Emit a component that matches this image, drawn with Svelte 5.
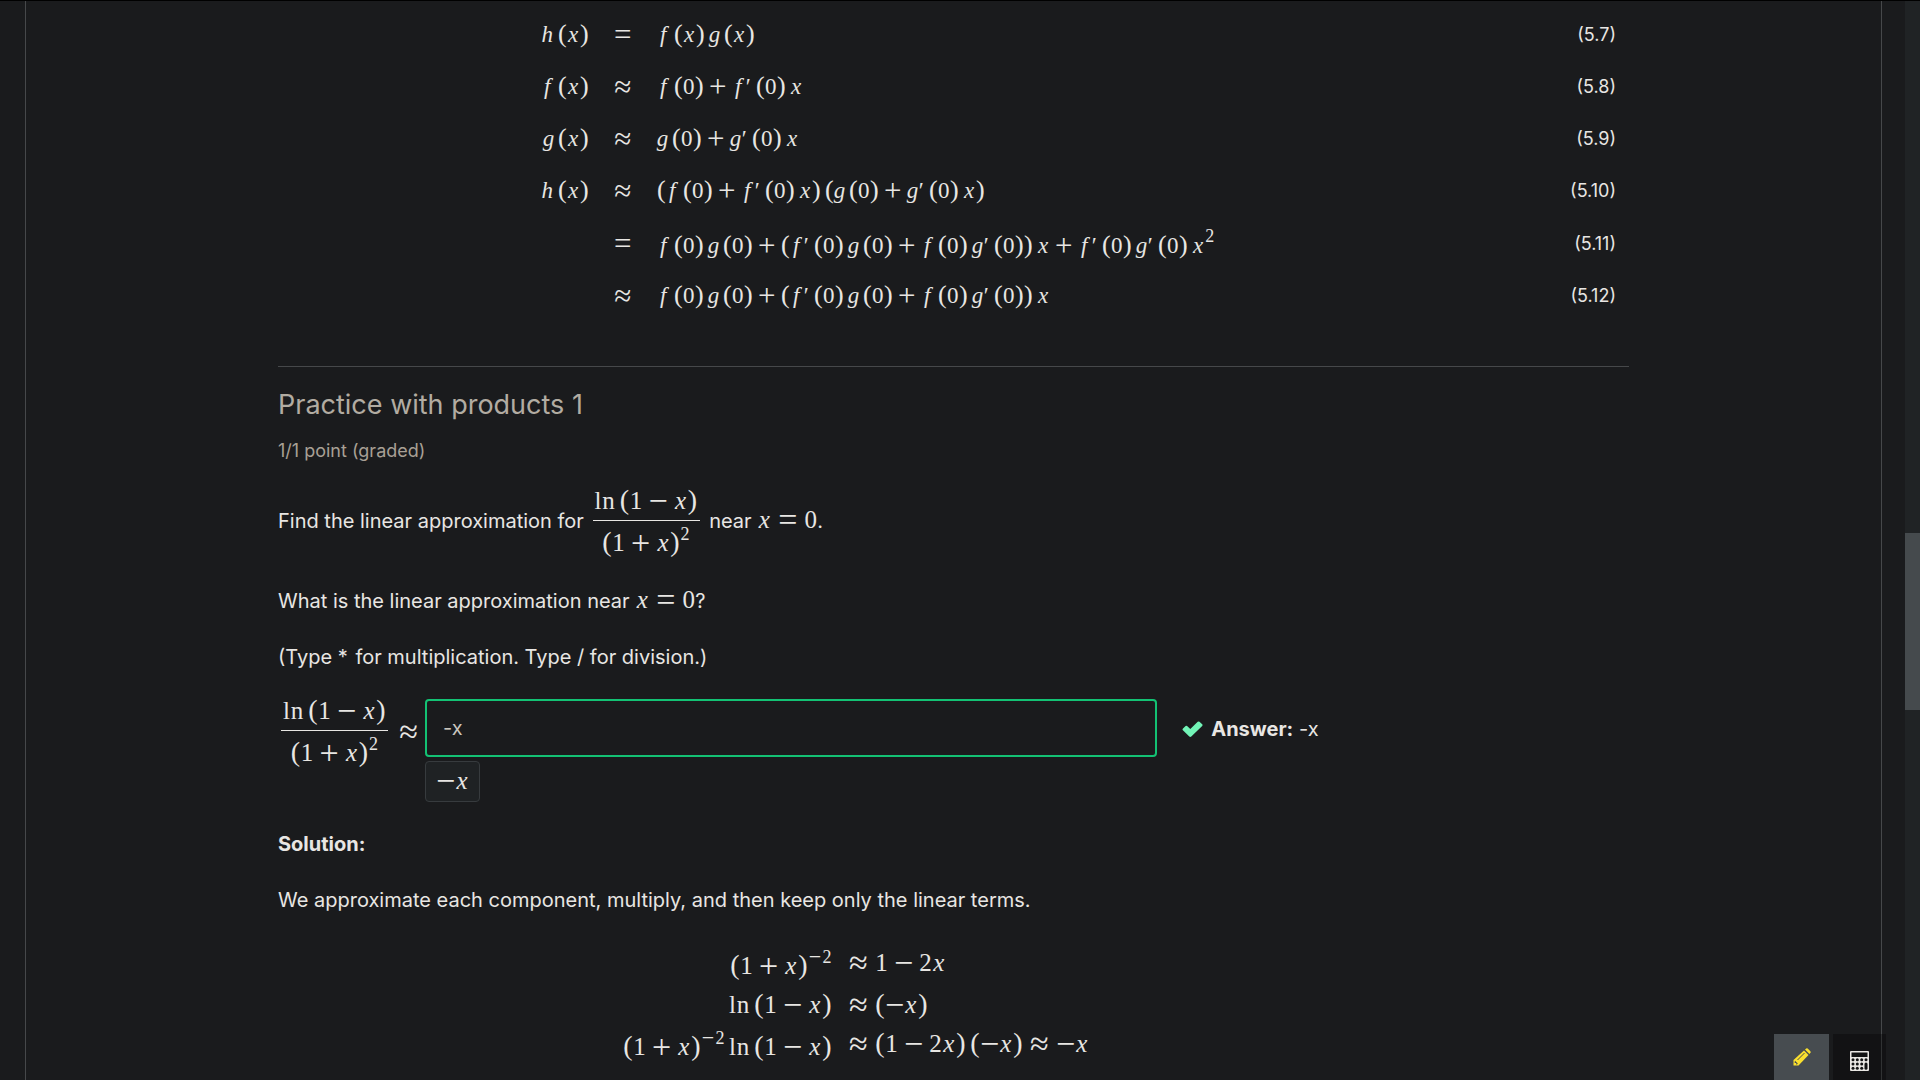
<script>
  const equations = [
    { left: 'h (x)', rel: '=', right: 'f (x) g (x)', no: '(5.7)' },
    { left: 'f (x)', rel: '≈', right: 'f (0)+f′ (0) x', no: '(5.8)' },
    { left: 'g (x)', rel: '≈', right: 'g (0)+g′ (0) x', no: '(5.9)' },
    { left: 'h (x)', rel: '≈', right: '(f (0)+f′ (0) x) (g (0)+g′ (0) x)', no: '(5.10)' },
    { left: '', rel: '=', right: 'f (0) g (0)+(f′ (0) g (0)+f (0) g′ (0)) x+f′ (0) g′ (0) x²', no: '(5.11)', tall: true },
    { left: '', rel: '≈', right: 'f (0) g (0)+(f′ (0) g (0)+f (0) g′ (0)) x', no: '(5.12)' }
  ];

  const steps = [
    ['(1+x)⁻²', '≈1−2x'],
    ['ln (1−x)', '≈(~x)'],
    ['(1+x)⁻² ln (1−x)', '≈(1−2x) (~x)≈~x']
  ];

  const kinds = {
    ' ': 'thin', '(': 'paren', ')': 'paren', '+': 'op', '−': 'op', '~': 'op neg',
    '=': 'op rel', '≈': 'op rel', x: 'var', f: 'var', g: 'var slim', h: 'var',
    '′': 'prime', '²': 'sup', '⁻': 'sup minus', l: 'fn', n: 'fn wide'
  };
  const glyphs = { '~': '−', ' ': '', '²': '2', '⁻': '−' };

  // Splits a formula into glyphs, each with the spacing class it needs.
  const tokens = (s) => [...s].map((c) => ({ kind: kinds[c] ?? 'digit', text: glyphs[c] ?? c }));

  let answer = $state('-x');
</script>

{#snippet math(s)}<span class="math">{#each tokens(s) as t}<span class={t.kind}>{t.text}</span>{/each}</span>{/snippet}

{#snippet fraction()}<span class="frac"><span class="num">{@render math('ln (1−x)')}</span><span class="den">{@render math('(1+x)²')}</span></span>{/snippet}

<div class="page">
  <main class="panel">
    <section class="equations">
      {#each equations as e}
        <div class="eq" class:tall={e.tall}>
          <div class="lhs">{@render math(e.left)}</div>
          <div class="mid">{@render math(e.rel)}</div>
          <div class="rhs">{@render math(e.right)}</div>
          <div class="no">{e.no}</div>
        </div>
      {/each}
    </section>

    <section class="problem">
      <h3>Practice with products 1</h3>
      <div class="points">1/1 point (graded)</div>
      <p class="find">Find the linear approximation for {@render fraction()} near {@render math('x=0')}.</p>
      <p>What is the linear approximation near {@render math('x=0')}?</p>
      <p>(Type <span class="star">*</span> for multiplication. Type / for division.)</p>

      <div class="answer-row">
        <label class="prompt" for="answer">{@render fraction()}{@render math('≈')}</label>
        <div class="field">
          <input id="answer" type="text" bind:value={answer} />
          <div class="preview">{@render math('~x')}</div>
        </div>
        <div class="status">
          <svg class="check" viewBox="0 0 21 16" aria-hidden="true">
            <path d="M1 7.500 L3.600 4.900 Q4.400 4.400 5.100 5 L8.300 8 L15.700 .8 Q16.600 0 17.500 .8 L20.200 3.300 Q20.900 4 20.200 4.900 L9.300 15.500 Q8.300 16.300 7.300 15.500 L.9 9.300 Q.1 8.400 1 7.500Z" />
          </svg>
          <span><strong>Answer:</strong> -x</span>
        </div>
      </div>

      <p class="solution"><strong>Solution:</strong></p>
      <p>We approximate each component, multiply, and then keep only the linear terms.</p>

      <div class="steps">
        {#each steps as [left, right]}
          <div class="lhs">{@render math(left)}</div>
          <div class="rhs">{@render math(right)}</div>
        {/each}
      </div>
    </section>
  </main>

  <div class="scrollbar" aria-hidden="true">
    <div class="before"></div>
    <div class="thumb"></div>
    <div class="after"></div>
  </div>

  <div class="tools">
    <button class="pencil" aria-label="Notes">
      <svg width="18" height="18" viewBox="0 0 18 18">
        <path fill="#fbe02e" d="M.5 12 L11 2.500 L15.500 7 L5.500 17.500 H.5Z" />
        <path fill="#fbe02e" d="M12 1.600 L13.200.5 Q14 0 14.700.6 L17.400 3.300 Q18 4 17.500 4.800 L16.400 6Z" />
        <path fill="none" stroke="#474c50" d="M4.500 12 L11.500 5" />
        <path fill="#474c50" d="M2 12.800 L4.800 15.600 L4 16.400 H3.200 V14.900 H1.700 V14Z" />
      </svg>
    </button>
    <button class="calc" aria-label="Calculator">
      <svg width="19" height="20" viewBox="0 0 19 20">
        <rect width="19" height="20" rx="1" fill="#e8e6e3" />
        <rect x="1.500" y="1.500" width="16" height="4.500" fill="#121314" />
        <g fill="#121314">
          {#each [8.7, 13, 17.3] as y}
            {#each [3, 7.3, 11.7] as x}
              <circle cx={x} cy={y} r="1.500" />
            {/each}
          {/each}
          <circle cx="16" cy="8.700" r="1.500" />
          <rect x="14.500" y="11.500" width="3" height="7.300" rx="1.500" />
        </g>
      </svg>
    </button>
  </div>
</div>

<style>
  :global(body) {
    background: #1a1b1d;
  }
  .page {
    position: relative;
    box-sizing: border-box;
    display: flex;
    height: 100vh;
    overflow: hidden;
    border-top: 1px solid #000;
    background: #1a1b1d;
    color: #e8e6e3;
    font: 20px/28px Inter, "Liberation Sans", sans-serif;
  }
  .panel {
    flex: 1;
    box-sizing: border-box;
    min-width: 0;
    overflow: hidden;
    margin: 0 23px 0 25px;
    padding: 8px 252px 0;
    border: solid #46484a;
    border-width: 0 1px;
  }

  /* Formula glyphs */
  .math {
    font-family: "Liberation Serif", serif;
    font-size: 25px;
    line-height: 28px;
    white-space: nowrap;
  }
  .math span {
    display: inline-block;
    text-align: center;
    line-height: 24px;
  }
  .math .thin { width: 4px; }
  .math .digit { width: 13px; }
  .math .paren { width: 10px; font-size: 28px; }
  .math .var { width: 14px; font-style: italic; }
  .math .slim { width: 12px; }
  .math .fn { width: 7px; }
  .math .wide { width: 14px; }
  .math .op { width: 19px; margin: 0 6px; font-size: 34px; vertical-align: -3px; }
  .math .rel { margin: 0 7px; }
  .math .neg { margin: 0; }
  .math .sup { width: 10px; font-size: 18px; vertical-align: 11px; line-height: 16px; }
  .math .minus { width: 14px; font-size: 22px; vertical-align: 10px; }

  .eq {
    display: grid;
    grid-template-columns: 23% 68px 1fr auto;
    align-items: center;
    height: 52px;
  }
  .eq .math { font-size: 23px; }
  .eq .digit { width: 12px; }
  .eq .paren { width: 9px; font-size: 26px; }
  .eq .var { width: 13px; }
  .eq .slim { width: 11px; }
  .eq .op { width: 18px; margin: 0 5px; font-size: 31px; }
  .eq .mid .op { margin: 0; }
  .eq .prime { width: 7px; }
  .lhs { text-align: right; }
  .mid { text-align: center; }
  .no { padding-right: 13px; font-size: 18px; }
  .tall { height: 53px; }

  .equations { padding-bottom: 44px; }
  .problem { border-top: 1px solid #46484a; }
  h3 {
    margin: 22px 0 0;
    color: #b2aca2;
    font-size: 27px;
    font-weight: 400;
    line-height: 32px;
  }
  .points {
    margin-top: 16px;
    color: #a8a095;
    font-size: 18px;
    line-height: 28px;
  }
  p { margin: 0 0 28px; }
  .find { margin: 22px 0 28px; }
  .star { margin-right: 2px; }

  .frac {
    display: inline-flex;
    flex-direction: column;
    margin: 0 4px 0 3px;
    vertical-align: middle;
  }
  .num, .den { text-align: center; }
  .num {
    padding: 0 2px 4px;
    border-bottom: 1px solid #e8e6e3;
  }
  .den { padding-top: 5px; }

  .answer-row { display: flex; }
  .prompt {
    display: flex;
    align-items: center;
    height: 66px;
  }
  .field { flex: 0 0 54.2%; }
  input {
    display: block;
    box-sizing: border-box;
    width: 100%;
    height: 58px;
    padding: 0 16px;
    border: 2px solid #13c274;
    border-radius: 4px;
    background: #1a1b1d;
    color: #c9c5be;
    font: 20px Inter, "Liberation Sans", sans-serif;
  }
  .preview {
    display: inline-block;
    margin-top: 4px;
    padding: 5px 10px;
    border: 1px solid #373b3e;
    border-radius: 4px;
    background: #1f2224;
  }
  .status {
    display: flex;
    align-items: center;
    gap: 8px;
    height: 60px;
    margin-left: 25px;
  }
  .check { width: 21px; height: 16px; fill: #72f4b7; }
  .solution { margin-top: 28px; }

  .steps {
    display: grid;
    grid-template-columns: 41% 1fr;
    column-gap: 10px;
    row-gap: 10px;
    padding-top: 7px;
  }

  .scrollbar {
    display: flex;
    flex-direction: column;
    width: 15px;
    background: #202325;
  }
  .before { flex: 532; }
  .thumb { flex: 177; background: #454a4d; }
  .after { flex: 370; }

  .tools {
    position: absolute;
    right: 34px;
    bottom: 0;
    display: flex;
    gap: 4px;
  }
  button {
    display: flex;
    justify-content: center;
    height: 46px;
    padding: 14px 0 0;
    border: 0;
  }
  .pencil { width: 55px; background: #474c50; }
  .calc { width: 53px; padding-top: 17px; background: rgba(0, 0, 0, 0.3); }
</style>
